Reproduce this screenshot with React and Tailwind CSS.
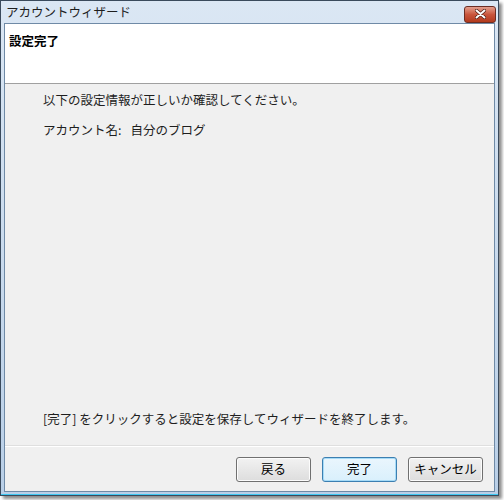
const FONT = { fontFamily: '"Meiryo", "Noto Sans CJK JP", "Noto Sans", sans-serif' };

function Btn({ children, primary }) {
  return (
    <button
      type="button"
      className={
        primary
          ? 'flex h-[25px] w-[75px] items-center justify-center rounded-[3px] border border-[#3c7fb1] bg-gradient-to-b from-[#eaf6fd] to-[#d9f0fc] text-[12.5px] text-black shadow-[inset_0_0_0_1px_#a6dbf7]'
          : 'flex h-[25px] w-[75px] items-center justify-center rounded-[3px] border border-[#707070] bg-gradient-to-b from-[#f2f2f2] to-[#dddddd] text-[12.5px] text-black shadow-[inset_0_0_0_1px_#fcfcfc]'
      }
    >
      {children}
    </button>
  );
}

export default function App() {
  return (
    <div className="h-[500px] w-[504px] overflow-hidden bg-white" style={FONT}>
      <div className="flex h-[496px] w-[499px] flex-col border border-[#3a4a5c] bg-gradient-to-b from-[#dbe7f4] to-[#b9cfe7] shadow-[3px_3px_3px_rgba(0,0,0,0.45)]">
        <div className="flex h-[22px] shrink-0 items-center justify-between pl-[5px] pr-[2px]">
          <span className="text-[12.5px] leading-none text-[#1e1e1e]">アカウントウィザード</span>
          <div className="mt-[4px] flex h-[17px] w-[32px] items-center justify-center rounded-[3px] border border-[#6b2d23] bg-gradient-to-b from-[#e39f8d] via-[#c9553c] to-[#b23a1d]">
            <svg width="11" height="10" viewBox="0 0 11 10">
              <path d="M1.5 1.5 L9.5 8.5 M9.5 1.5 L1.5 8.5" stroke="#4a1a12" strokeWidth="3.4" strokeLinecap="round" />
              <path d="M1.5 1.5 L9.5 8.5 M9.5 1.5 L1.5 8.5" stroke="#ffffff" strokeWidth="2" strokeLinecap="round" />
            </svg>
          </div>
        </div>
        <div className="mx-[3px] mb-[2px] flex flex-1 flex-col border border-[#6f8aa6] bg-[#f0f0f0]">
          <div className="h-[60px] shrink-0 border-b border-[#a0a0a0] bg-white px-[4px] pt-[3px]">
            <span className="text-[12.5px] font-bold text-black">設定完了</span>
          </div>
          <div className="flex flex-1 flex-col px-[38px] pt-[7px] text-[12.5px] text-[#1e1e1e]">
            <p className="leading-[18px]">以下の設定情報が正しいか確認してください。</p>
            <p className="mt-[12px] leading-[18px]">
              アカウント名:<span className="ml-[9px]">自分のブログ</span>
            </p>
            <p className="mt-auto mb-[17px] leading-[18px]">[完了] をクリックすると設定を保存してウィザードを終了します。</p>
          </div>
          <div className="flex h-[46px] shrink-0 items-center justify-end gap-[11px] border-t border-[#dfdfdf] pr-[11px] pt-[1px] shadow-[inset_0_1px_0_#ffffff]">
            <Btn>戻る</Btn>
            <Btn primary>完了</Btn>
            <Btn>キャンセル</Btn>
          </div>
        </div>
        <div className="h-[1px] bg-[#3ec8f2]" />
      </div>
    </div>
  );
}
